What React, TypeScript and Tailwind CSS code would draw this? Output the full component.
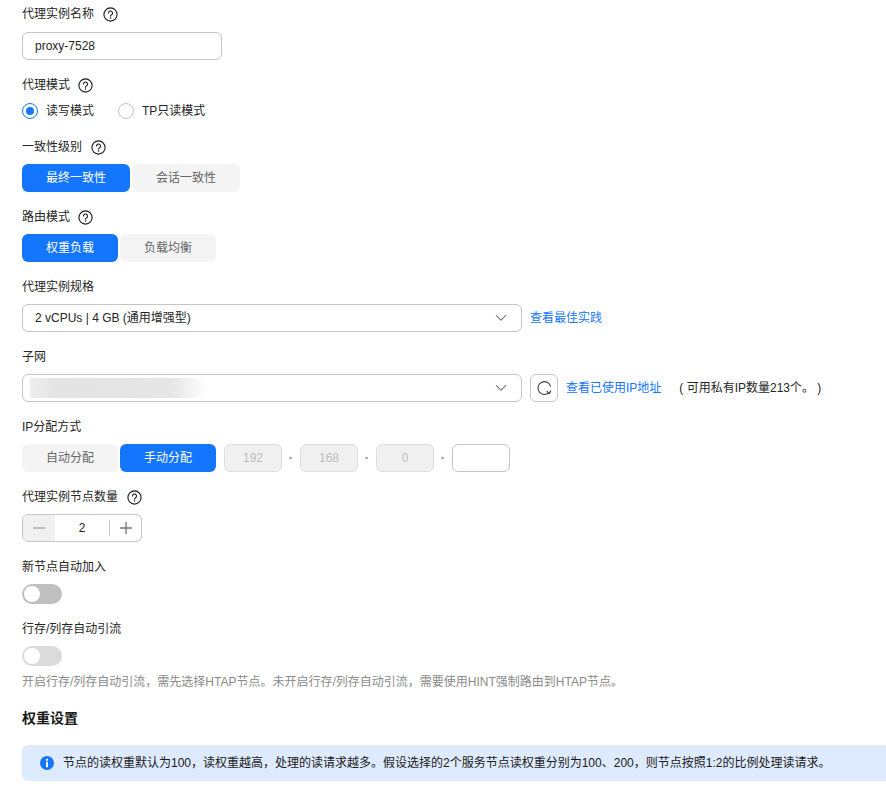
import React from "react";

const Help = () => (
  <svg width="15" height="15" viewBox="0 0 15 15" fill="none" className="shrink-0">
    <circle cx="7.5" cy="7.5" r="6.6" stroke="#191919" strokeWidth="1.1" />
    <path d="M5.5 6a2 2 0 1 1 3.1 1.7c-.7.4-1.1.8-1.1 1.5" stroke="#191919" strokeWidth="1.1" strokeLinecap="round" />
    <circle cx="7.5" cy="11" r=".75" fill="#191919" />
  </svg>
);

const Label = ({ text, help, gap, cls }: { text: string; help?: boolean; gap?: string; cls?: string }) => (
  <div className={`flex h-5 items-center text-[12px] text-[#252525] ${gap ?? "gap-[7px]"} ${cls ?? ""}`}>
    <span>{text}</span>
    {help && <Help />}
  </div>
);

const Seg = ({ text, active, w }: { text: string; active?: boolean; w: string }) => (
  <div
    className={`flex h-7 items-center justify-center rounded-[6px] text-[12px] ${w} ${
      active ? "bg-[#1476ff] text-white" : "bg-[#f4f4f4] text-[#666666]"
    }`}
  >
    {text}
  </div>
);

const Chevron = () => (
  <svg width="12" height="8" viewBox="0 0 12 8" fill="none">
    <path d="M1 1.2l5 5 5-5" stroke="#7a7a7a" strokeWidth="1.1" />
  </svg>
);

const Octet = ({ text }: { text: string }) => (
  <div className="flex h-7 w-[58px] items-center justify-center rounded-[6px] border border-[#dfdfdf] bg-[#f0f0f0] text-[12px] font-medium text-[#bdbdbd]">
    {text}
  </div>
);

const Dot = () => <div className="flex w-[18px] justify-center text-[12px] font-bold text-[#8a8a8a]">·</div>;

const Toggle = ({ disabled }: { disabled?: boolean }) => (
  <div className={`flex h-5 w-10 items-center rounded-full pl-[2px] ${disabled ? "bg-[#dbdbdb]" : "bg-[#bfbfbf]"}`}>
    <div className="h-4 w-4 rounded-full bg-white" />
  </div>
);

export default function App() {
  return (
    <div className="h-[792px] w-[886px] overflow-hidden bg-white pt-1 font-['Liberation_Sans','Noto_Sans_CJK_SC',sans-serif] text-[12px] text-[#252525]">
      <div className="pl-[22px]">
        <Label text="代理实例名称" help gap="gap-[9px]" />
        <div className="mt-2 flex h-7 w-[200px] items-center rounded-[6px] border border-[#c4c4c4] pl-3 text-[12px]">proxy-7528</div>

        <Label text="代理模式" help gap="gap-[8px]" cls="mt-[15px]" />
        <div className="mt-[8px] flex h-4 items-center text-[12px]">
          <div className="flex h-4 w-4 items-center justify-center rounded-full border border-[#1476ff]">
            <div className="h-2 w-2 rounded-full bg-[#1476ff]" />
          </div>
          <span className="ml-2">读写模式</span>
          <div className="ml-6 h-4 w-4 rounded-full border border-[#c4c4c4]" />
          <span className="ml-2">TP只读模式</span>
        </div>

        <Label text="一致性级别" help gap="gap-[9px]" cls="mt-[17px] pt-[2px]" />
        <div className="mt-2 flex gap-[2px]">
          <Seg text="最终一致性" active w="w-[108px]" />
          <Seg text="会话一致性" w="w-[108px]" />
        </div>

        <Label text="路由模式" help gap="gap-[8px]" cls="mt-[14px] pt-[2px]" />
        <div className="mt-2 flex gap-[2px]">
          <Seg text="权重负载" active w="w-[96px]" />
          <Seg text="负载均衡" w="w-[96px]" />
        </div>

        <Label text="代理实例规格" cls="mt-[14px] pt-[2px]" />
        <div className="mt-2 flex items-center">
          <div className="flex h-7 w-[500px] items-center justify-between rounded-[6px] border border-[#c4c4c4] pl-3 pr-[14px]">
            <span>2 vCPUs | 4 GB (通用增强型)</span>
            <Chevron />
          </div>
          <span className="ml-2 text-[#1476ff]">查看最佳实践</span>
        </div>

        <Label text="子网" cls="mt-[14px] pt-[2px]" />
        <div className="mt-2 flex items-center">
          <div className="flex h-7 w-[500px] items-center justify-between rounded-[6px] border border-[#c4c4c4] pl-[7px] pr-[14px]">
            <div className="h-5 w-[177px] bg-[linear-gradient(to_right,#eeeeee_0%,#e3e3e3_15%,#e6e6e6_80%,#ffffff_100%)]" />
            <Chevron />
          </div>
          <div className="ml-2 flex h-7 w-7 items-center justify-center rounded-[6px] border border-[#c4c4c4]">
            <svg width="16" height="16" viewBox="0 0 16 16" fill="none">
              <path d="M14.6 6.6A6.4 6.4 0 1 0 12.9 12.6" stroke="#3c3c3c" strokeWidth="1.1" />
              <path d="M10.8 11.3l2.7 2.2 1.3-3" stroke="#3c3c3c" strokeWidth="1.1" />
            </svg>
          </div>
          <span className="ml-2 text-[#1476ff]">查看已使用IP地址</span>
          <span className="ml-[18px]">( 可用私有IP数量213个。 )</span>
        </div>

        <Label text="IP分配方式" cls="mt-[14px] pt-[2px]" />
        <div className="mt-2 flex items-center">
          <Seg text="自动分配" w="w-[96px]" />
          <div className="w-[2px]" />
          <Seg text="手动分配" active w="w-[96px]" />
          <div className="w-2" />
          <Octet text="192" />
          <Dot />
          <Octet text="168" />
          <Dot />
          <Octet text="0" />
          <Dot />
          <div className="h-7 w-[58px] rounded-[6px] border border-[#c4c4c4]" />
        </div>

        <Label text="代理实例节点数量" help gap="gap-[9px]" cls="mt-[14px] pt-[2px]" />
        <div className="mt-2 flex h-7 w-[120px] items-center overflow-hidden rounded-[6px] border border-[#c4c4c4]">
          <div className="flex h-full w-[32px] items-center justify-center bg-[#f0f0f0]">
            <div className="h-[2px] w-[12px] bg-[#bdbdbd]" />
          </div>
          <div className="flex-1 text-center text-[12px]">2</div>
          <div className="h-4 w-px bg-[#c4c4c4]" />
          <div className="relative flex w-[31px] items-center justify-center">
            <svg width="12" height="12" viewBox="0 0 12 12">
              <path d="M6 0v12M0 6h12" stroke="#7a7a7a" strokeWidth="1.4" />
            </svg>
          </div>
        </div>

        <Label text="新节点自动加入" cls="mt-[14px] pt-[2px]" />
        <div className="mt-2"><Toggle /></div>

        <Label text="行存/列存自动引流" cls="mt-[14px] pt-[2px]" />
        <div className="mt-2"><Toggle disabled /></div>

        <div className="mt-[6px] flex h-5 items-center text-[12px] text-[#8a8a8a]">
          开启行存/列存自动引流，需先选择HTAP节点。未开启行存/列存自动引流，需要使用HINT强制路由到HTAP节点。
        </div>

        <div className="mt-[16px] flex h-5 items-center text-[14px] font-bold text-[#191919]">权重设置</div>

        <div className="mt-[17px] flex h-9 items-center rounded-l-[6px] bg-[#deebff] pl-[18px]">
          <svg width="14" height="14" viewBox="0 0 14 14" className="shrink-0">
            <circle cx="7" cy="7" r="7" fill="#1476ff" />
            <rect x="6" y="2.8" width="2" height="2" fill="#fff" />
            <rect x="6" y="5.8" width="2" height="5.4" fill="#fff" />
          </svg>
          <span className="ml-[9px] whitespace-nowrap text-[#191919]">
            节点的读权重默认为100，读权重越高，处理的读请求越多。假设选择的2个服务节点读权重分别为100、200，则节点按照1:2的比例处理读请求。
          </span>
        </div>
      </div>
    </div>
  );
}
